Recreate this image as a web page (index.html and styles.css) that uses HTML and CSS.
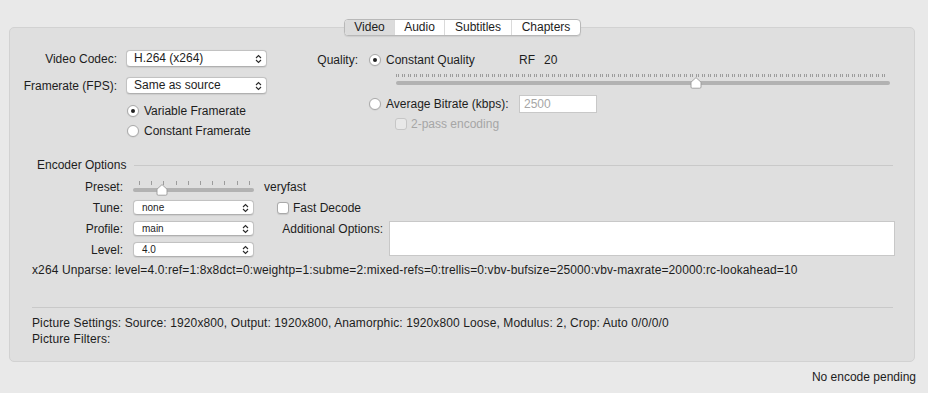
FILE: index.html
```html
<!DOCTYPE html>
<html lang="en">
<head>
    <meta charset="UTF-8">
    <title>Video Settings</title>
    <link rel="stylesheet" href="styles.css">
</head>
<body>
    <div class="tabs">
        <div class="tab-group">
            <div class="tab tab-video selected">Video</div>
            <div class="tab tab-audio">Audio</div>
            <div class="tab tab-subtitles">Subtitles</div>
            <div class="tab tab-chapters">Chapters</div>
        </div>
    </div>

    <div class="panel">
        <div class="top">
            <!-- Codec and framerate -->
            <div class="video-col">
                <div class="video-grid">
                    <span class="field-label">Video Codec:</span>
                    <div class="popup">H.264 (x264)<svg class="chevron" width="7" height="10" viewBox="0 0 7 10"><path d="M1 4 L3.5 1.5 L6 4 M1 6 L3.5 8.5 L6 6" fill="none" stroke="#2a2a2a" stroke-width="1.1"/></svg></div>
                    <span class="field-label">Framerate (FPS):</span>
                    <div class="popup">Same as source<svg class="chevron" width="7" height="10" viewBox="0 0 7 10"><path d="M1 4 L3.5 1.5 L6 4 M1 6 L3.5 8.5 L6 6" fill="none" stroke="#2a2a2a" stroke-width="1.1"/></svg></div>
                </div>
                <div class="radio-group">
                    <div class="choice"><span class="radio checked"></span>Variable Framerate</div>
                    <div class="choice"><span class="radio"></span>Constant Framerate</div>
                </div>
            </div>

            <!-- Quality -->
            <div class="quality-col">
                <span class="field-label quality-label">Quality:</span>
                <div class="quality-options">
                    <div class="choice q-row">
                        <span class="radio checked"></span>
                        <span class="q-name">Constant Quality</span>
                        <span class="rf">RF</span>
                        <span>20</span>
                    </div>
                    <div class="slider quality-slider">
                        <div class="ticks"></div>
                        <div class="track"></div>
                        <svg class="thumb" style="left: 60.8%" width="12" height="12" viewBox="0 0 12 12"><path d="M6 0.6 L11 5.2 L11 10 Q11 11.2 9.8 11.2 L2.2 11.2 Q1 11.2 1 10 L1 5.2 Z" fill="#fff" stroke="#9a9a9a" stroke-width="0.9"/></svg>
                    </div>
                    <div class="choice bitrate-row">
                        <span class="radio"></span>
                        <span class="bitrate-name">Average Bitrate (kbps):</span>
                        <span class="text-input">2500</span>
                    </div>
                    <div class="choice twopass disabled"><span class="checkbox"></span>2-pass encoding</div>
                </div>
            </div>
        </div>

        <!-- Encoder options -->
        <div class="section-title">
            <span>Encoder Options</span>
            <div class="rule"></div>
        </div>
        <div class="encoder-grid">
            <span class="field-label">Preset:</span>
            <div class="slider preset-slider">
                <div class="ticks"></div>
                <div class="track"></div>
                <svg class="thumb" style="left: 24%" width="12" height="12" viewBox="0 0 12 12"><path d="M6 0.6 L11 5.2 L11 10 Q11 11.2 9.8 11.2 L2.2 11.2 Q1 11.2 1 10 L1 5.2 Z" fill="#fff" stroke="#9a9a9a" stroke-width="0.9"/></svg>
            </div>
            <span class="preset-value">veryfast</span>

            <span class="field-label">Tune:</span>
            <div class="popup small">none<svg class="chevron" width="7" height="10" viewBox="0 0 7 10"><path d="M1 4 L3.5 1.5 L6 4 M1 6 L3.5 8.5 L6 6" fill="none" stroke="#2a2a2a" stroke-width="1.1"/></svg></div>
            <div class="choice fast-decode"><span class="checkbox"></span>Fast Decode</div>

            <span class="field-label">Profile:</span>
            <div class="popup small">main<svg class="chevron" width="7" height="10" viewBox="0 0 7 10"><path d="M1 4 L3.5 1.5 L6 4 M1 6 L3.5 8.5 L6 6" fill="none" stroke="#2a2a2a" stroke-width="1.1"/></svg></div>
            <span class="field-label additional-label">Additional Options:</span>
            <div class="textarea"></div>

            <span class="field-label">Level:</span>
            <div class="popup small">4.0<svg class="chevron" width="7" height="10" viewBox="0 0 7 10"><path d="M1 4 L3.5 1.5 L6 4 M1 6 L3.5 8.5 L6 6" fill="none" stroke="#2a2a2a" stroke-width="1.1"/></svg></div>
        </div>

        <div class="unparse">x264 Unparse: level=4.0:ref=1:8x8dct=0:weightp=1:subme=2:mixed-refs=0:trellis=0:vbv-bufsize=25000:vbv-maxrate=20000:rc-lookahead=10</div>

        <div class="divider"></div>

        <div class="summary">
            <div>Picture Settings: Source: 1920x800, Output: 1920x800, Anamorphic: 1920x800 Loose, Modulus: 2, Crop: Auto 0/0/0/0</div>
            <div>Picture Filters:</div>
        </div>
    </div>

    <div class="status">No encode pending</div>
</body>
</html>
```

FILE: styles.css
```css
/* Variables */
:root {
    --window: #e9e9e9;
    --panel: #dfdfdf;
    --panel-border: #d2d2d2;
    --text: #1d1d1d;
    --muted: #a6a6a6;
    --control-border: #c2c2c2;
    --track: #b2b2b2;
    --tick: #9c9c9c;
}

* {
    margin: 0;
    padding: 0;
    box-sizing: border-box;
}

body {
    width: 928px;
    height: 393px;
    overflow: hidden;
    background: var(--window);
    font-family: "Liberation Sans", Arial, sans-serif;
    font-size: 12px;
    line-height: 16px;
    color: var(--text);
}

/* Tab bar */
.tabs {
    display: flex;
    justify-content: center;
    padding-top: 19px;
    padding-right: 3px;
    margin-bottom: -9px;
    position: relative;
    z-index: 1;
}

.tab-group {
    display: flex;
    height: 17px;
    background: #fff;
    border: 1px solid #b8b8b8;
    border-radius: 4px;
    box-shadow: 0 1px 1px rgba(0, 0, 0, 0.08);
    overflow: hidden;
}

.tab {
    line-height: 15px;
    text-align: center;
    border-left: 1px solid #dadada;
}

.tab:first-child {
    border-left: none;
}

.tab.selected {
    background: #dcdcdc;
}

.tab-video { width: 49px; }
.tab-audio { width: 50px; }
.tab-subtitles { width: 67px; }
.tab-chapters { width: 69px; }

/* Main panel */
.panel {
    margin-left: 9px;
    width: 906px;
    height: 335px;
    background: var(--panel);
    border: 1px solid var(--panel-border);
    border-radius: 5px;
}

.top {
    display: flex;
}

.field-label {
    text-align: right;
    white-space: nowrap;
}

/* Left column */
.video-col {
    width: 257px;
    padding-top: 22px;
}

.video-grid {
    display: grid;
    grid-template-columns: 107px 141px;
    column-gap: 9px;
    row-gap: 10px;
    align-items: center;
}

.popup {
    position: relative;
    height: 17px;
    background: #fff;
    border: 1px solid var(--control-border);
    border-bottom-color: #b0b0b0;
    border-radius: 4px;
    padding-left: 7px;
    line-height: 15px;
    box-shadow: 0 0.5px 1px rgba(0, 0, 0, 0.08);
}

.popup .chevron {
    position: absolute;
    right: 4px;
    top: 2.5px;
}

.popup.small {
    height: 15px;
    line-height: 13px;
    font-size: 10px;
    padding-left: 8px;
}

.popup.small .chevron {
    top: 1.5px;
}

.radio-group {
    margin-top: 7px;
    padding-left: 117px;
}

.choice {
    display: flex;
    align-items: center;
    height: 20px;
    white-space: nowrap;
}

.radio {
    width: 12px;
    height: 12px;
    margin-right: 5px;
    background: #fff;
    border: 1px solid #a9a9a9;
    border-radius: 50%;
    box-shadow: 0 0.5px 1px rgba(0, 0, 0, 0.1);
    display: flex;
    align-items: center;
    justify-content: center;
    flex-shrink: 0;
}

.radio.checked::after {
    content: "";
    width: 4px;
    height: 4px;
    border-radius: 50%;
    background: #222;
}

.checkbox {
    width: 12px;
    height: 12px;
    margin-right: 4px;
    background: #fff;
    border: 1px solid #a9a9a9;
    border-radius: 3px;
    box-shadow: 0 0.5px 1px rgba(0, 0, 0, 0.1);
    flex-shrink: 0;
}

/* Quality column */
.quality-col {
    display: flex;
    margin-left: 33px;
    padding-top: 24px;
}

.quality-label {
    width: 58px;
    margin-right: 11px;
}

.quality-options {
    display: flex;
    flex-direction: column;
}

.q-row {
    height: 16px;
}

.q-name {
    width: 133px;
}

.rf {
    width: 25px;
}

.slider {
    position: relative;
}

.slider .track {
    height: 4px;
    background: var(--track);
    border-radius: 2px;
}

.slider .thumb {
    position: absolute;
    margin-left: -6px;
}

.quality-slider {
    margin-left: 27px;
    width: 494px;
    height: 20px;
    padding-top: 6px;
}

.quality-slider .ticks {
    height: 3px;
    margin-right: 3px;
    margin-bottom: 4px;
    background-image: repeating-linear-gradient(to right,
        var(--tick) 0 1px, transparent 1px 2px,
        var(--tick) 2px 3px, transparent 3px 6px);
}

.quality-slider .thumb {
    top: 9px;
}

.bitrate-row {
    margin-top: 7px;
    height: 18px;
}

.bitrate-name {
    width: 133px;
}

.text-input {
    width: 78px;
    height: 18px;
    padding-left: 4px;
    line-height: 16px;
    background: #fff;
    border: 1px solid #c8c8c8;
    color: var(--muted);
}

.twopass {
    margin-top: 4px;
    margin-left: 26px;
    height: 14px;
}

.disabled {
    color: var(--muted);
}

.disabled .checkbox {
    background: #e8e8e8;
    border-color: #c6c6c6;
    box-shadow: none;
}

/* Encoder options */
.section-title {
    display: flex;
    align-items: center;
    gap: 8px;
    margin-top: 16px;
    padding-left: 27px;
    margin-right: 21px;
}

.section-title .rule {
    flex: 1;
    height: 1px;
    background: #c9c9c9;
}

.encoder-grid {
    display: grid;
    grid-template-columns: 113px 121px 117px 504px;
    grid-template-rows: repeat(4, 21px);
    column-gap: 10px;
    align-items: center;
    margin-top: 3px;
}

.preset-slider {
    height: 21px;
    padding-top: 5px;
}

.preset-slider .ticks {
    height: 4px;
    margin: 0 4px 3px 6px;
    background-image: repeating-linear-gradient(to right,
        var(--tick) 0 1px, transparent 1px 12.2px);
}

.preset-slider .thumb {
    top: 8px;
}

.preset-value {
    grid-column: 3 / 5;
}

.fast-decode {
    grid-column: 3 / 5;
    margin-left: 13px;
}

.additional-label {
    margin-right: -2px;
}

.textarea {
    grid-row: 3 / 5;
    grid-column: 4;
    align-self: start;
    margin-top: 3px;
    margin-left: -2px;
    height: 35px;
    background: #fff;
    border: 1px solid #c8c8c8;
}

.unparse {
    margin-top: 2px;
    padding-left: 22px;
    white-space: nowrap;
    letter-spacing: 0.12px;
}

.divider {
    height: 1px;
    margin: 29px 21px 0 22px;
    background: #c9c9c9;
}

.summary {
    margin-top: 7px;
    padding-left: 22px;
    letter-spacing: 0.11px;
}

.status {
    margin-top: 7px;
    padding-right: 12px;
    text-align: right;
}
```
